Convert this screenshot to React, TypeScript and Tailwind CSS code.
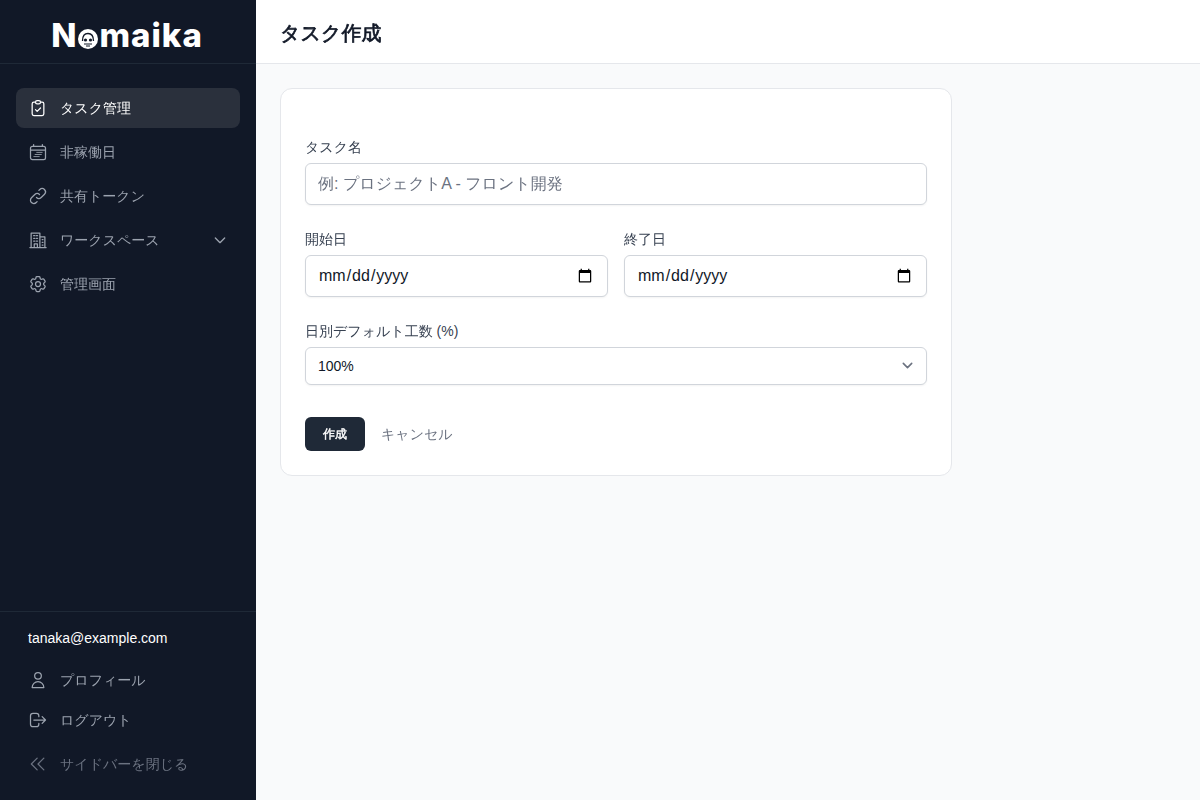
import React from "react";

const font = "font-['Liberation_Sans','WenQuanYi_Zen_Hei',sans-serif]";

function Icon({ d, d2, size = 20, sw = 1.5, className = "" }: { d: string; d2?: string; size?: number; sw?: number; className?: string }) {
  return (
    <svg viewBox="0 0 24 24" width={size} height={size} fill="none" stroke="currentColor" strokeWidth={sw} strokeLinecap="round" strokeLinejoin="round" className={className}>
      <path d={d} />
      {d2 && <path d={d2} strokeWidth={1} />}
    </svg>
  );
}

const icons = {
  clipboard: "M9 5H7a2 2 0 00-2 2v12a2 2 0 002 2h10a2 2 0 002-2V7a2 2 0 00-2-2h-2M9 5a2 2 0 002 2h2a2 2 0 002-2M9 5a2 2 0 012-2h2a2 2 0 012 2m-6 9l2 2 4-4",
  calendar: "M6.75 3v2.25M17.25 3v2.25M3 18.750V7.500a2.250 2.250 0 0 1 2.250-2.250h13.500A2.250 2.250 0 0 1 21 7.500v11.250A2.250 2.250 0 0 1 18.750 21H5.250A2.250 2.250 0 0 1 3 18.750ZM3 9.750h18",
  calendarLines: "M10.500 12.500h6.500M8.500 15h7.500M7 17.500h6.500",
  link: "M13.828 10.172a4 4 0 00-5.656 0l-4 4a4 4 0 105.656 5.656l1.102-1.101m-.758-4.899a4 4 0 005.656 0l4-4a4 4 0 00-5.656-5.656l-1.100 1.100",
  building: "M2.250 21h19.500M3.750 21V3.750h10.500V21M14.250 8.250h6V21M6.750 6.750h1.500M10 6.750h1.500M6.750 10h1.500M10 10h1.500M6.750 13.250h1.500M10 13.250h1.500M7.500 21v-4.500h3.750V21M17 11.500h1M17 14.750h1M17 18h1",
  cog: "M9.594 3.940c.090-.542.560-.940 1.110-.940h2.593c.550 0 1.020.398 1.110.940l.213 1.281c.063.374.313.686.645.870.074.040.147.083.220.127.325.196.720.257 1.075.124l1.217-.456a1.125 1.125 0 0 1 1.370.490l1.296 2.247a1.125 1.125 0 0 1-.260 1.431l-1.003.827c-.293.241-.438.613-.430.992a7.723 7.723 0 0 1 0 .255c-.008.378.137.750.430.990l1.005.828c.424.350.534.955.260 1.430l-1.298 2.247a1.125 1.125 0 0 1-1.369.491l-1.217-.456c-.355-.133-.750-.072-1.076.124a6.470 6.470 0 0 1-.220.128c-.331.183-.581.495-.644.869l-.213 1.281c-.090.543-.560.940-1.110.940h-2.594c-.550 0-1.019-.398-1.110-.940l-.213-1.281c-.062-.374-.312-.686-.644-.870a6.520 6.520 0 0 1-.220-.127c-.325-.196-.720-.257-1.076-.124l-1.217.456a1.125 1.125 0 0 1-1.369-.490l-1.297-2.247a1.125 1.125 0 0 1 .260-1.431l1.004-.827c.292-.240.437-.613.430-.991a6.932 6.932 0 0 1 0-.255c.007-.380-.138-.751-.430-.992l-1.004-.827a1.125 1.125 0 0 1-.260-1.430l1.297-2.247a1.125 1.125 0 0 1 1.370-.491l1.216.456c.356.133.751.072 1.076-.124.072-.044.146-.086.220-.128.332-.183.582-.495.644-.869l.214-1.280ZM15 12a3 3 0 1 1-6 0 3 3 0 0 1 6 0Z",
  user: "M16 7a4 4 0 11-8 0 4 4 0 018 0zM12 14a7 7 0 00-7 7h14a7 7 0 00-7-7z",
  logout: "M17 16l4-4m0 0l-4-4m4 4H7m6 4v1a3 3 0 01-3 3H6a3 3 0 01-3-3V7a3 3 0 013-3h4a3 3 0 013 3v1",
  doubleLeft: "M11 19l-7-7 7-7m8 14l-7-7 7-7",
  chevronDown: "M19 9l-7 7-7-7",
};

function Logo() {
  return (
    <div className="flex items-center font-['Inter',sans-serif] text-[33px] font-extrabold leading-none tracking-[1px] text-white">
      <span>N</span>
      <svg viewBox="0 0 20 20" className="mt-[6px] mr-[1px] ml-[1px] h-[20px] w-[20px]">
        <circle cx="10" cy="10" r="10" fill="#fff" />
        <path d="M4.500 12 C4.500 6.500 7 4.500 10 4.500 C13 4.500 15.500 6.500 15.500 12" fill="none" stroke="#111827" strokeWidth="1.300" />
        <circle cx="7.500" cy="11" r="1.600" fill="#111827" />
        <circle cx="12.500" cy="11" r="1.600" fill="#111827" />
        <path d="M6 15h8M8 17h4" stroke="#111827" strokeWidth="1" />
      </svg>
      <span>maika</span>
    </div>
  );
}

function NavItem({ icon, icon2, label, active, right, muted }: { icon: string; icon2?: string; label: string; active?: boolean; right?: React.ReactNode; muted?: boolean }) {
  return (
    <div
      className={`flex h-10 items-center rounded-lg px-3 text-sm ${
        active ? "bg-[#2a303c] text-white" : muted ? "text-[#6b7280]" : "text-[#9ca3af]"
      }`}
    >
      <span className="mr-3 flex h-5 w-5 shrink-0 items-center justify-center">
        <Icon d={icon} d2={icon2} />
      </span>
      <span className="flex-1">{label}</span>
      {right}
    </div>
  );
}

const labelCls = "mb-1.5 block text-sm font-medium text-[#374151]";
const inputCls = "block h-[42px] w-full rounded-md border border-[#d1d5db] bg-white px-3 text-base text-[#111827] shadow-xs";

export default function App() {
  return (
    <div className={`flex h-screen w-full bg-[#f9fafb] ${font}`}>
      <aside className="flex w-64 shrink-0 flex-col bg-[#111827]">
        <div className="flex h-16 items-center justify-center border-b border-[#1f2937] pt-2 pr-[2px]">
          <Logo />
        </div>
        <nav className="flex flex-1 flex-col gap-1 p-4 pt-6">
          <NavItem active label="タスク管理" icon={icons.clipboard} />
          <NavItem label="非稼働日" icon={icons.calendar} icon2={icons.calendarLines} />
          <NavItem label="共有トークン" icon={icons.link} />
          <NavItem label="ワークスペース" icon={icons.building} right={<Icon d={icons.chevronDown} size={16} sw={2} />} />
          <NavItem label="管理画面" icon={icons.cog} />
        </nav>
        <div className="border-t border-[#1f2937] px-4 pt-4 pb-4">
          <div className="mb-2 h-5 truncate px-3 text-sm leading-5 text-white">tanaka@example.com</div>
          <div className="mt-3 flex flex-col">
            <NavItem label="プロフィール" icon={icons.user} />
            <NavItem label="ログアウト" icon={icons.logout} />
            <div className="mt-1">
              <NavItem muted label="サイドバーを閉じる" icon={icons.doubleLeft} />
            </div>
          </div>
        </div>
      </aside>
      <main className="flex min-w-0 flex-1 flex-col">
        <header className="flex h-16 shrink-0 items-center border-b border-[#e5e7eb] bg-white px-6 pt-[2px]">
          <h1 className="text-xl font-bold text-[#111827] [-webkit-text-stroke:0.7px_#111827]">タスク作成</h1>
        </header>
        <div className="p-6">
          <form className="w-[672px] rounded-xl border border-[#e5e7eb] bg-white px-6 pt-12 pb-6">
            <label className={labelCls}>タスク名</label>
            <input type="text" placeholder="例: プロジェクトA - フロント開発" className={`${inputCls} placeholder:text-[#6b7280]`} />
            <div className="mt-6 grid grid-cols-2 gap-4">
              <div>
                <label className={labelCls}>開始日</label>
                <input type="date" className={inputCls} />
              </div>
              <div>
                <label className={labelCls}>終了日</label>
                <input type="date" className={inputCls} />
              </div>
            </div>
            <label className={`mt-6 ${labelCls}`}>日別デフォルト工数 (%)</label>
            <div className="relative">
              <select className="block h-[38px] w-full appearance-none rounded-md border border-[#d1d5db] bg-white px-3 text-sm text-[#111827] shadow-xs">
                <option>100%</option>
              </select>
              <svg viewBox="0 0 20 20" fill="none" stroke="#6b7280" strokeWidth="1.500" strokeLinecap="round" strokeLinejoin="round" className="pointer-events-none absolute top-[8px] right-[9px] h-[21px] w-[21px]">
                <path d="m6 8 4 4 4-4" />
              </svg>
            </div>
            <div className="mt-8 flex items-center gap-4">
              <button type="button" className="h-[34px] w-[60px] rounded-md bg-[#1f2937] text-xs font-bold text-white [-webkit-text-stroke:0.4px_#ffffff]">作成</button>
              <button type="button" className="text-sm text-[#6b7280]">キャンセル</button>
            </div>
          </form>
        </div>
      </main>
    </div>
  );
}
